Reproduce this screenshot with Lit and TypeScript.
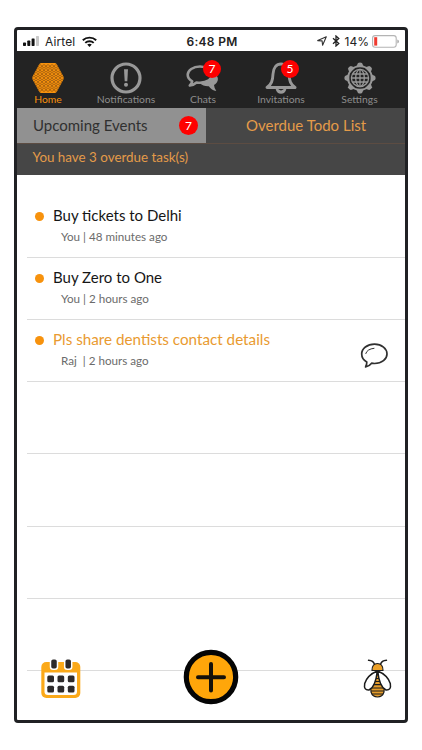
import { LitElement, html, css, svg, nothing } from "lit";
import { customElement, property } from "lit/decorators.js";

type Task = { title: string; who: string; when: string; hot?: boolean };

const TASKS: Task[] = [
  { title: "Buy tickets to Delhi", who: "You", when: "48 minutes ago" },
  { title: "Buy Zero to One", who: "You", when: "2 hours ago" },
  { title: "Pls share dentists contact details", who: "Raj ", when: "2 hours ago", hot: true },
];

// centres of the honeycomb cells, clipped by the outer hexagon
const cells: { x: number; y: number }[] = [];
for (let r = 0; r < 7; r++)
  for (let c = 0; c < 8; c++) {
    const x = 2 + c * 4 + (r % 2 ? 0 : 2);
    const y = 3.3 + r * 3.9;
    if (Math.abs(x - 16) < 14.6 - Math.abs(y - 15) * 0.5) cells.push({ x, y });
  }

const teeth = [0, 45, 90, 135, 180, 225, 270, 315];

const icons = {
  home: html`<svg width="32" height="30" viewBox="0 0 32 30">
    <path d="M9.500 0h13q1.500 0 2.300 1.300l6.500 12q.9 1.700 0 3.400l-6.500 12q-.8 1.300-2.300 1.300h-13q-1.500 0-2.300-1.300l-6.500-12q-.9-1.700 0-3.400l6.500-12q.8-1.300 2.300-1.300z" fill="#f7920d"/>
    ${cells.map((p) => svg`<path d="M${p.x} ${p.y - 1.7}l1.450 .85v1.700l-1.450 .85l-1.450-.85v-1.700z" fill="none" stroke="#9a5a10" stroke-width=".8"/>`)}
  </svg>`,
  alert: html`<svg width="32" height="32" viewBox="0 0 32 32">
    <circle cx="16" cy="16" r="14" fill="none" stroke="#989898" stroke-width="3.200"/>
    <path d="M14 7.200h4l-.7 12h-2.600z" fill="#989898"/><circle cx="16" cy="22.800" r="2" fill="#989898"/>
  </svg>`,
  chats: html`<svg width="34" height="30" viewBox="0 -2 34 30">
    <path d="M29 9c4.500 3.500 3.500 8.500-1 11q.2 3 2.300 6q-4.800-.7-7.500-4.700q-5.500.3-9-3.300q10-.3 15.200-9z" fill="#989898"/>
    <path d="M14 1.500c-7 0-12.300 3.800-12.300 8.300c0 2.800 1.800 5 4.500 6.500q-.3 2.200-2.400 4.200q4.200-.6 6.700-3q1.700.3 3.500.3c7 0 12.300-3.600 12.300-8s-5.300-8.300-12.300-8.300z" fill="#232323" stroke="#989898" stroke-width="2.600" stroke-linejoin="round"/>
  </svg>`,
  bell: html`<svg width="32" height="32" viewBox="0 0 32 32">
    <path d="M2 25.500C6.500 22 7.700 19 8 12C8.300 5.500 11.500 2 16 2s7.700 3.500 8 10c.3 7 1.500 10 6 13.500z" fill="none" stroke="#989898" stroke-width="2.900" stroke-linejoin="round"/>
    <path d="M10.500 26.500h11q-1.200 5.300-5.500 5.300t-5.500-5.300z" fill="#989898"/><path d="M13.200 27q2.800 2.800 5.600 0z" fill="#232323"/>
  </svg>`,
  gear: html`<svg width="32" height="32" viewBox="0 0 32 32" fill="none" stroke="#989898">
    ${teeth.map((a) => svg`<path d="M12 5.300l2-4.300q2-1.200 4 0l2 4.300z" fill="#989898" stroke="none" transform="rotate(${a} 16 16)"/>`)}
    <circle cx="16" cy="16" r="11.900" stroke-width="1.900"/>
    <g stroke-width="1.300"><circle cx="16" cy="16" r="8.600"/><ellipse cx="16" cy="16" rx="4.300" ry="8.600"/><path d="M16 7.500v17M7.500 16h17M9 12h14M9 20h14"/></g>
  </svg>`,
};

@customElement("nav-item")
export class NavItem extends LitElement {
  @property() label = "";
  @property() badge = "";
  @property({ attribute: false }) icon: unknown = nothing;
  static styles = css`
    :host { position: relative; display: flex; flex-direction: column; align-items: center; height: 57px; color: #8d8d8d; }
    .icon { height: 41px; display: flex; align-items: center; padding-top: 12px; box-sizing: border-box; }
    svg { display: block; }
    .label { font-size: 10.350px; line-height: 14px; white-space: nowrap; }
    .badge { position: absolute; left: 50%; top: 9px; width: 18px; height: 18px; border-radius: 50%; background: #fe0000; color: #fff; font-size: 12px; line-height: 18px; text-align: center; }
  `;
  render() {
    return html`<div class="icon">${this.icon}</div><div class="label">${this.label}</div>
      ${this.badge ? html`<span class="badge">${this.badge}</span>` : nothing}`;
  }
}

@customElement("app-root")
export class AppRoot extends LitElement {
  static styles = css`
    :host { display: block; box-sizing: border-box; width: 422px; height: 750px; padding: 27px 14px; background: #fff; font-family: Lato, "Noto Sans", sans-serif; }
    * { box-sizing: border-box; }
    svg { display: block; }
    .phone { position: relative; width: 394px; height: 696px; border: 3px solid #202124; border-radius: 4px; background: #fff; overflow: hidden; display: flex; flex-direction: column; }
    .status { height: 21px; flex: none; display: grid; grid-template-columns: 1fr auto 1fr; align-items: center; padding: 1px 6px 0 6px; font-family: Inter, "Liberation Sans", sans-serif; font-size: 12px; color: #222; }
    .left, .right { display: flex; align-items: center; }
    .left { gap: 5px; }
    .right { justify-content: flex-end; gap: 5px; }
    .right span { margin-right: -2px; }
    .carrier { margin-right: 2px; letter-spacing: .1px; }
    .time { font-weight: 600; letter-spacing: .3px; padding-left: 2px; }
    .nav { height: 57px; flex: none; background: #232323; display: grid; grid-template-columns: 62px 94px 60px 96px 61px; }
    .nav .on { color: #f7920d; }
    .tabs { height: 36px; flex: none; display: flex; background: #464646; border-bottom: 1px solid #5c4c42; font-size: 15px; line-height: 35px; }
    .tab { width: 189px; background: #919191; color: #303030; display: flex; align-items: center; justify-content: space-between; padding: 0 8px 0 16px; }
    .count { width: 19px; height: 19px; border-radius: 50%; background: #fe0000; color: #fff; font-size: 12px; line-height: 19px; text-align: center; }
    .current { flex: 1; color: #e49b49; padding-left: 40px; }
    .notice { height: 31px; flex: none; background: #464646; color: #e49b49; font-size: 13.400px; line-height: 27px; padding-left: 15.500px; }
    .list { margin-left: 10px; padding-top: 20px; }
    .row { height: 62px; border-bottom: 1px solid #dcdcdc; display: flex; padding: 10px 16px 0 8px; }
    .row.first { height: 63px; padding-top: 11px; }
    .dot { width: 9px; height: 9px; border-radius: 50%; background: #f7920d; margin: 6px 9px 0 0; }
    .body { flex: 1; white-space: pre; }
    .title { font-size: 15px; line-height: 19px; color: #161616; }
    .hot .title { color: #e99a30; font-size: 15.230px; }
    .meta { font-size: 11.650px; line-height: 16px; margin: 4px 0 0 8px; color: #6b6b6b; }
    .reply { margin-top: 13px; }
    .blank { height: 72.300px; border-bottom: 1px solid #dcdcdc; }
    .actions { position: absolute; left: 23px; right: 12px; top: 619px; height: 56px; display: grid; grid-template-columns: 1fr auto 1fr; align-items: center; }
    .calendar { margin-top: 3px; }
    .add { margin-right: 11px; }
    .bee { justify-self: end; margin-top: 4px; }
  `;

  render() {
    return html`<div class="phone">
      <header class="status">
        <div class="left">
          <svg width="17" height="10" viewBox="0 0 17 10" fill="#111"><rect y="6.500" width="3" height="3.500" rx=".7"/><rect x="4.300" y="4.600" width="3" height="5.400" rx=".7"/><rect x="8.600" y="2.400" width="3" height="7.600" rx=".7"/><rect x="13" width="3" height="10" rx=".7" fill="#c8c8c8"/></svg>
          <span class="carrier">Airtel</span>
          <svg width="15" height="11" viewBox="0 0 15 11"><g fill="none" stroke="#111" stroke-width="1.900"><path d="M.8 4.300a9.600 9.600 0 0 1 13.400 0"/><path d="M3.300 6.900a6 6 0 0 1 8.400 0"/></g><path d="M5.200 8.600q2.300-1.800 4.600 0L7.500 11z" fill="#111"/></svg>
        </div>
        <span class="time">6:48 PM</span>
        <div class="right">
          <svg width="10" height="10" viewBox="0 0 10 10"><path d="M9.300.7L5.600 9.200L5.100 4.900L.7 4.600z" fill="none" stroke="#333" stroke-width="1.100" stroke-linejoin="round"/></svg>
          <svg width="8" height="12" viewBox="0 0 8 12"><path d="M1 3.200l5.800 5.400L4 11V1l2.800 2.400L1 8.800" fill="none" stroke="#222" stroke-width="1.300"/></svg>
          <span>14%</span>
          <svg width="27" height="13" viewBox="0 0 27 13"><rect x=".6" y=".6" width="23.600" height="11.600" rx="2.500" fill="none" stroke="#b4b4b4" stroke-width="1.100"/><rect x="2.200" y="2.200" width="3" height="8.400" fill="#ef3a30"/><path d="M25.300 4.500q1.700.4 1.700 2t-1.700 2z" fill="#aaa"/></svg>
        </div>
      </header>
      <nav class="nav">
        <nav-item class="on" label="Home" .icon=${icons.home}></nav-item>
        <nav-item label="Notifications" .icon=${icons.alert}></nav-item>
        <nav-item label="Chats" badge="7" .icon=${icons.chats}></nav-item>
        <nav-item label="Invitations" badge="5" .icon=${icons.bell}></nav-item>
        <nav-item label="Settings" .icon=${icons.gear}></nav-item>
      </nav>
      <div class="tabs">
        <div class="tab"><span>Upcoming Events</span><span class="count">7</span></div>
        <div class="current"><span>Overdue Todo List</span></div>
      </div>
      <div class="notice">You have 3 overdue task(s)</div>
      <main class="list">
        ${TASKS.map((t, i) => html`<div class="row ${i ? "" : "first"} ${t.hot ? "hot" : ""}">
          <i class="dot"></i>
          <div class="body"><div class="title">${t.title}</div><div class="meta">${t.who} | ${t.when}</div></div>
          ${t.hot ? html`<svg class="reply" width="29" height="26" viewBox="0 0 29 26" fill="none" stroke="#303030" stroke-linecap="round" stroke-linejoin="round"><path d="M14.500 1.200C7.200 1.200 1.700 5.500 1.700 11c0 3.500 2 6.300 5.100 8q.1 2.600-1.200 4.900q4-.9 6-3.700q1.400.3 2.900.3c7.300 0 12.500-4.300 12.500-9.600s-5.200-9.700-12.500-9.700z" stroke-width="1.700"/><path d="M5.800 10.500q1.300-4.500 8.200-5.200" stroke-width="1"/></svg>` : nothing}
        </div>`)}
        ${[0, 1, 2, 3].map(() => html`<div class="blank"></div>`)}
      </main>
      <footer class="actions">
        <svg class="calendar" width="42" height="42" viewBox="0 0 42 42">
          <rect x="1.300" y="4" width="39" height="36" rx="5" fill="#fba919"/>
          <path d="M4.500 14.500h32.500v19q0 3.500-3.500 3.500h-25.500q-3.500 0-3.500-3.500z" fill="#fff"/>
          <g fill="#2d2a2b" stroke="#fff" stroke-width="1.500"><rect x="10.500" y=".8" width="7" height="10.500" rx="2.500"/><rect x="24.700" y=".8" width="7" height="10.500" rx="2.500"/></g>
          <g fill="#2d2a2b">${[17.5, 27.8].map((y) => [7.3, 17.5, 27.8].map((x) => svg`<rect x=${x} y=${y} width="6.700" height="6.700" rx="1.500"/>`))}</g>
        </svg>
        <svg class="add" width="56" height="56" viewBox="0 0 56 56"><circle cx="28" cy="28" r="24.700" fill="#ffa60a" stroke="#050505" stroke-width="5.200"/><path d="M28 15v26.500M15 28.200h26" stroke="#15110a" stroke-width="4" stroke-linecap="round"/></svg>
        <svg class="bee" width="30" height="42" viewBox="0 0 30 42" fill="none" stroke="#1c1c1c" stroke-linecap="round" stroke-linejoin="round">
          <path d="M11.500 6.500Q10.500 2.500 5.500 2.200M17.500 6.500Q18.500 2.500 23.500 2.200" stroke-width="1.400"/>
          <path d="M9 12.500q0-7 5.500-7t5.500 7z" fill="#eda128" stroke-width="1.200"/>
          <path d="M14.500 14q-8 15-6.500 20q1.500 5 6.500 5t6.500-5q1.500-5-6.500-20z" fill="#e59c2b" stroke-width="1.200"/>
          <path d="M12.500 20.500h4M11.500 23.500h6M10 26.700h9M8.500 30h12M8.500 33h12M9.500 36h10" stroke-width="1.200"/>
          <path d="M14.300 13Q4.500 17 1.700 25.500Q.5 32.500 6 32Q12.500 29 14.300 13zM14.700 13Q24.500 17 27.300 25.500Q28.500 32.500 23 32Q16.500 29 14.700 13z" fill="#fff" stroke-width="1.500"/>
        </svg>
      </footer>
    </div>`;
  }
}
